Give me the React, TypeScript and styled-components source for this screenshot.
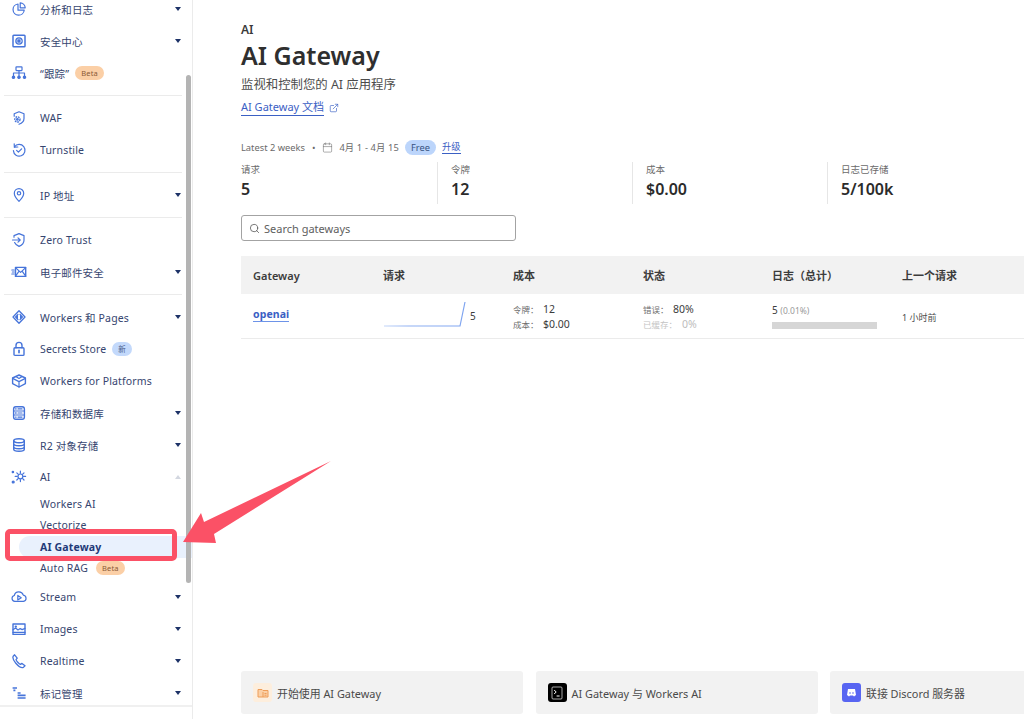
import React from "react";
import styled, { createGlobalStyle } from "styled-components";
import { Calendar, Search, ExternalLink } from "lucide-react";

const Global = createGlobalStyle`
  html, body { margin: 0; padding: 0; background: #fff; }
  body { font-family: "Noto Sans", "Noto Sans CJK SC", sans-serif; color: #313131; }
  * { box-sizing: border-box; }
`;

const Page = styled.div`
  position: relative;
  display: flex;
  width: 1024px;
  height: 719px;
  overflow: hidden;
`;

const Sidebar = styled.nav`
  width: 193px;
  flex: none;
  height: 719px;
  border-right: 1px solid #ebebeb;
  padding-right: 9px;
  overflow: hidden;
`;

const NavList = styled.div`
  margin-top: -7px;
  display: flex;
  flex-direction: column;
`;

const Row = styled.div`
  display: flex;
  align-items: center;
  height: 32px;
  padding-left: 11px;
  font-size: 10.5px;
  letter-spacing: 0.15px;
  color: #36456f;
`;

const IconSlot = styled.span`
  width: 16px;
  height: 16px;
  margin-right: 13px;
  flex: none;
  color: #4674da;
  display: flex;
  align-items: center;
  justify-content: center;
`;

const Label = styled.span`
  flex: 1;
  display: flex;
  align-items: center;
  white-space: nowrap;
`;

const Caret = styled.span<{ $up?: boolean }>`
  width: 0;
  height: 0;
  margin-right: 2px;
  border-left: 3.5px solid transparent;
  border-right: 3.5px solid transparent;
  ${(p) =>
    p.$up
      ? "border-bottom: 4px solid #d3d7e0;"
      : "border-top: 4px solid #1d3267;"}
`;

const Pill = styled.span<{ $kind: "beta" | "new"; $gap?: number }>`
  margin-left: ${(p) => p.$gap ?? 6}px;
  height: 14px;
  padding: 0 6px;
  border-radius: 7px;
  font-size: 7.5px;
  line-height: 14px;
  letter-spacing: 0.2px;
  background: ${(p) => (p.$kind === "beta" ? "#fbcfa6" : "#c3d9fb")};
  color: ${(p) => (p.$kind === "beta" ? "#8a5a36" : "#4a5f8c")};
`;

const Divider = styled.div`
  height: 1px;
  margin: 6px 1px 6px 4px;
  background: #ebebeb;
`;

const SubList = styled.div`
  display: flex;
  flex-direction: column;
  margin-bottom: 2px;
`;

const SubRow = styled.div<{ $active?: boolean }>`
  display: flex;
  align-items: center;
  height: 21.5px;
  font-size: 10.5px;
  letter-spacing: 0.15px;
  color: #36456f;
  ${(p) =>
    p.$active
      ? `
    margin-left: 19px;
    margin-right: -9px;
    padding-left: 21px;
    font-weight: 700;
    color: #1f3a78;
    background: #e9f1fd;
    border-radius: 11px 0 0 11px;
  `
      : "padding-left: 40px;"}
`;

const SidebarFooter = styled.div`
  position: absolute;
  left: 0;
  bottom: 0;
  width: 192px;
  height: 14px;
  background: #fff;
  border-top: 2px solid #f0f0f0;
`;

const Main = styled.main`
  flex: 1;
  min-width: 0;
  height: 719px;
  padding: 22px 0 5px 48px;
  display: flex;
  flex-direction: column;
`;

const Eyebrow = styled.div`
  font-size: 12px;
  line-height: 16px;
  font-weight: 600;
  color: #3a3a3a;
`;

const Title = styled.h1`
  margin: 0;
  font-size: 25px;
  line-height: 35px;
  font-weight: 600;
  color: #2f2f2f;
`;

const Subtitle = styled.div`
  margin-top: 2px;
  font-size: 12.4px;
  line-height: 20px;
  color: #4c4c4c;
`;

const DocLine = styled.div`
  margin-top: 4px;
  display: flex;
  align-items: center;
  gap: 5px;
  font-size: 11px;
  line-height: 16px;
  color: #3b60c4;
`;

const DocLink = styled.a`
  border-bottom: 1px solid #3b60c4;
`;

const RangeLine = styled.div`
  margin-top: 23px;
  display: flex;
  align-items: center;
  height: 16px;
  font-size: 9.3px;
  color: #6a6a6a;
`;

const Dot = styled.span`
  margin: 0 7px;
`;

const DateText = styled.span`
  margin: 0 6px;
  letter-spacing: 0.15px;
`;

const FreeBadge = styled.span`
  height: 15px;
  padding: 0 6px;
  border-radius: 8px;
  background: #bcd5fb;
  color: #36517f;
  font-size: 9.3px;
  line-height: 15px;
`;

const UpgradeLink = styled.a`
  margin-left: 6px;
  color: #3b60c4;
  border-bottom: 1px solid #3b60c4;
  line-height: 12px;
`;

const Stats = styled.div`
  margin-top: 7px;
  display: grid;
  grid-template-columns: repeat(4, 195px);
  height: 42px;
`;

const Stat = styled.div<{ $first?: boolean }>`
  padding-top: 1px;
  padding-left: ${(p) => (p.$first ? 0 : "13px")};
  border-left: ${(p) => (p.$first ? "none" : "1px solid #e6e6e6")};
  margin-left: ${(p) => (p.$first ? 0 : "1px")};
`;

const StatLabel = styled.div`
  font-size: 9.5px;
  line-height: 14px;
  color: #6a6a6a;
`;

const StatValue = styled.div`
  font-size: 16px;
  line-height: 24px;
  font-weight: 600;
  color: #2b2b2b;
`;

const SearchBox = styled.div`
  margin-top: 11px;
  width: 275px;
  height: 26px;
  flex: none;
  border: 1px solid #a3a3a3;
  border-radius: 3px;
  display: flex;
  align-items: center;
  gap: 4px;
  padding-left: 7px;
  font-size: 11px;
  color: #5e5e5e;
`;

const Table = styled.div`
  margin-top: 15px;
  width: 800px;
`;

const TableGrid = styled.div`
  display: grid;
  grid-template-columns: 130px 130px 130px 129px 130px 151px;
`;

const HeadRow = styled(TableGrid)`
  height: 38px;
  background: #f2f2f2;
  align-items: center;
  font-size: 11px;
  font-weight: 600;
  color: #3c3c3c;
`;

const BodyRow = styled(TableGrid)`
  height: 45px;
  align-items: center;
  border-bottom: 1px solid #ebebeb;
  font-size: 10px;
  line-height: 14px;
`;

const Cell = styled.div`
  padding-left: 12px;
  min-width: 0;
`;

const GatewayCell = styled(Cell)`
  margin-top: -4px;
`;

const GatewayLink = styled.a`
  font-size: 10.5px;
  font-weight: 700;
  color: #3b60c4;
  border-bottom: 1px solid #6d93e8;
  letter-spacing: 0.1px;
`;

const SparkCell = styled(Cell)`
  display: flex;
  align-items: center;
  gap: 4px;
  padding-left: 13px;
  color: #3c3c3c;
`;

const SparkSvg = styled.svg`
  margin-top: -4px;
`;

const MetricCell = styled(Cell)`
  padding-top: 2px;
`;

const MetricLine = styled.div<{ $muted?: boolean }>`
  display: flex;
  align-items: baseline;
  height: 15.5px;
  font-size: 10.5px;
  color: ${(p) => (p.$muted ? "#bdbdbd" : "#3c3c3c")};
`;

const MetricKey = styled.span<{ $muted?: boolean }>`
  font-size: 8.5px;
  width: ${(p) => (p.$muted ? "39px" : "30px")};
  color: ${(p) => (p.$muted ? "#c4c4c4" : "#6e6e6e")};
`;

const LogCount = styled.div`
  font-size: 10px;
  line-height: 14px;
  color: #3c3c3c;
`;

const LogPct = styled.span`
  font-size: 8.5px;
  color: #9a9a9a;
`;

const Bar = styled.div`
  margin-top: 4px;
  width: 105px;
  height: 7px;
  background: #d6d6d6;
`;

const TimeCell = styled(Cell)`
  padding-top: 3px;
  font-size: 9px;
  color: #4c4c4c;
`;

const Cards = styled.div`
  margin-top: auto;
  display: grid;
  grid-template-columns: 282px 282px 282px;
  column-gap: 12.5px;
`;

const Card = styled.div`
  height: 43px;
  background: #f2f2f2;
  border-radius: 3px;
  display: flex;
  align-items: center;
  gap: 5px;
  padding-left: 12px;
  font-size: 10.9px;
  color: #4a4a4a;
`;

const CardIcon = styled.span<{ $bg: string; $fg: string }>`
  width: 19px;
  height: 19px;
  border-radius: 3px;
  background: ${(p) => p.$bg};
  color: ${(p) => p.$fg};
  display: flex;
  align-items: center;
  justify-content: center;
`;

const Scrollbar = styled.div`
  position: absolute;
  left: 186px;
  top: 75px;
  width: 5px;
  height: 508px;
  border-radius: 3px;
  background: #b4b4b4;
`;

const Highlight = styled.div`
  position: absolute;
  left: 5px;
  top: 529px;
  width: 172px;
  height: 32px;
  border: 5px solid #fb5166;
  border-radius: 5px;
`;

const Arrow = styled.svg`
  position: absolute;
  left: 0;
  top: 0;
  width: 1024px;
  height: 719px;
  pointer-events: none;
`;

const Svg = ({ children }: { children: React.ReactNode }) => (
  <svg width="16" height="16" viewBox="0 0 16 16" fill="none" stroke="currentColor" strokeWidth="1.2" strokeLinecap="round" strokeLinejoin="round">
    {children}
  </svg>
);

const icons: Record<string, React.ReactNode> = {
  analytics: <Svg><path d="M7 3a5.6 5.6 0 1 0 6.2 6.2H7Z" /><path d="M9.2 1.8a5.2 5.2 0 0 1 5 5H9.2Z" /></Svg>,
  security: <Svg><rect x="2" y="2.2" width="12" height="11.6" rx=".8" strokeWidth="1.5" /><circle cx="8" cy="8" r="3.8" fill="currentColor" stroke="none" /><circle cx="8" cy="8" r="2.2" stroke="#fff" strokeWidth=".6" /></Svg>,
  trace: <Svg><rect x="5" y="1.8" width="6" height="3.8" rx=".5" /><path d="M8 5.6V8M2.5 10.8V8h11v2.8M8 8v2.8" /><circle cx="2.5" cy="12.3" r="1.2" fill="currentColor" /><circle cx="8" cy="12.3" r="1.2" fill="currentColor" /><circle cx="13.5" cy="12.3" r="1.2" fill="currentColor" /></Svg>,
  waf: <Svg><path d="M3.2 6.2V3.8L8 1.8l5 2v4.6c0 2.8-2.2 4.8-5 5.8" /><circle cx="6.4" cy="9.4" r="2.6" strokeDasharray="1.7 .8" strokeLinecap="butt" strokeWidth="1.4" /><circle cx="6.4" cy="9.4" r=".8" /></Svg>,
  turnstile: <Svg><path d="M3.2 1.8l.2 3.4 3.4-.2" /><path d="M3.4 5A5.8 5.8 0 1 1 2.4 8.6" /><path d="M5.6 8.4l1.8 1.8 3.2-3.4" /></Svg>,
  ip: <Svg><path d="M8 14.4S3.3 9.8 3.3 6.3a4.7 4.7 0 0 1 9.4 0C12.7 9.8 8 14.4 8 14.4Z" /><circle cx="8" cy="6.3" r="1.7" /></Svg>,
  zero: <Svg><path d="M3 5.2V3.6L8 1.6l5 2v4.6c0 3-2.2 5-5 6.2-2-.8-3.6-2-4.4-3.8" /><path d="M1.5 8h7.5M7 5.8L9.2 8 7 10.2" /></Svg>,
  mail: <Svg><rect x="4.5" y="3.4" width="10.2" height="9" strokeWidth="1.4" /><path d="M4.5 3.6l5.1 4.8 5.1-4.8M4.5 12.2l3.6-5M14.7 12.2l-3.6-5M.8 6h2.4M1.4 8h1.8M.8 10h2.4" /></Svg>,
  workers: <Svg><path d="M8 1.8L2 8l6 6.2L14 8Z" strokeWidth="1.3" /><path d="M7 5.4L4.6 8 7 10.6M9 5.4L11.4 8 9 10.6" fill="currentColor" /></Svg>,
  secrets: <Svg><rect x="3" y="6.8" width="10" height="7.6" rx="1" strokeWidth="1.4" /><path d="M5 6.8V4.4a3 3 0 0 1 6 0v2.4" strokeWidth="1.4" /><path d="M8 9.4v2.2" strokeWidth="1.7" /></Svg>,
  platforms: <Svg><path d="M8 2l6.4 3v5.6L8 14 1.6 10.6V5Z" strokeWidth="1.4" /><path d="M1.6 5.4L8 8.6l6.4-3.2M8 8.6V14" /><path d="M4.8 3.6L8 5.4l3.2-1.8" /></Svg>,
  storage: <Svg><rect x="2.6" y="1.8" width="10.8" height="12.4" rx="2.2" strokeWidth="1.4" /><path d="M2.6 6h10.8M2.6 10h10.8M7 3.9h4M7 8h4M7 12.1h4" /><path d="M4.6 3.9h.5M4.6 8h.5M4.6 12.1h.5" strokeWidth="1.4" /></Svg>,
  r2: <Svg><ellipse cx="8" cy="3.8" rx="5.3" ry="2" strokeWidth="1.4" /><path d="M2.7 3.8v8.4c0 1.1 2.4 2 5.3 2s5.3-.9 5.3-2V3.8M2.7 6.8c0 1.1 2.4 2 5.3 2s5.3-.9 5.3-2M2.7 9.8c0 1.1 2.4 2 5.3 2s5.3-.9 5.3-2" strokeWidth="1.4" /></Svg>,
  ai: <Svg><circle cx="9.4" cy="7.4" r="2.4" /><path d="M9.4 2.2v2M9.4 10.6v2M4.2 7.4h2M12.6 7.4h2M5.8 3.8l1.3 1.3M11.7 9.7l1.3 1.3M13 3.8l-1.3 1.3M7.1 9.7L5.8 11" /><circle cx="1.9" cy="3" r=".7" fill="currentColor" /><circle cx="2.2" cy="13" r="1" fill="currentColor" /></Svg>,
  stream: <Svg><path d="M3.8 12.4a3 3 0 0 1-.5-5.9 4.7 4.7 0 0 1 9-.4 3.2 3.2 0 0 1 .2 6.3Z" /><path d="M6.8 6.4l3.4 2.4-3.4 2.2Z" /></Svg>,
  images: <Svg><rect x="2" y="3" width="12" height="10.4" strokeWidth="1.4" /><path d="M2 8.8l2.6-1.8 2.4 2 2.2-1.4 2 1 2.8-1.2" /><circle cx="4.8" cy="5.6" r=".6" /><path d="M2 11.4h12" /></Svg>,
  realtime: <Svg><path d="M3.6 1.8L2.2 3.2c-.7 1.4 0 4 2.6 7s6 4.8 7.6 4.2l1.6-1.6-3-2.4-1.6 1c-1.2-.4-3.8-3-4.4-4.8l1.2-1.4Z" strokeWidth="1.3" /></Svg>,
  tags: <Svg><path d="M1.6 3h4.4M2.4 5.4h2M6.6 8h3M6.6 10.4h8M6.6 13h8" strokeWidth="1.7" strokeLinecap="butt" /></Svg>,
};

type Item = { icon: string; label: string; caret?: boolean; pill?: ["beta" | "new", string] };

const NavRow = ({ icon, label, caret, pill }: Item) => (
  <Row>
    <IconSlot>{icons[icon]}</IconSlot>
    <Label>
      {label}
      {pill && <Pill $kind={pill[0]}>{pill[1]}</Pill>}
    </Label>
    {caret && <Caret />}
  </Row>
);

const Spark = () => (
  <SparkSvg width="82" height="26" viewBox="0 0 82 26" fill="none">
    <defs>
      <linearGradient id="sparkFade" x1="0" x2="1" y1="0" y2="0">
        <stop offset="0" stopColor="#c4d6f8" />
        <stop offset="0.3" stopColor="#8fb0f2" />
        <stop offset="1" stopColor="#7ea4f0" />
      </linearGradient>
    </defs>
    <path d="M0 25H76L81 1" stroke="url(#sparkFade)" strokeWidth="1.2" />
  </SparkSvg>
);

const DiscordMark = () => (
  <svg width="11" height="11" viewBox="0 0 11 11">
    <path d="M2 2h7l1 6-2 1.5-1-1H4l-1 1L1 8Z" fill="#fff" />
    <circle cx="4" cy="6" r=".8" fill="#5865f2" />
    <circle cx="7" cy="6" r=".8" fill="#5865f2" />
  </svg>
);

const FolderMark = () => (
  <svg width="12" height="12" viewBox="0 0 12 12" fill="#fbd0a6" stroke="#ee9d58" strokeWidth="1">
    <path d="M1 2.5h4l1 1h5v6.5H1Z" />
    <path d="M6 5v5M7.5 6.5h2M7.5 8.2h2" fill="none" />
  </svg>
);

const TerminalMark = () => (
  <svg width="12" height="14" viewBox="0 0 12 14" fill="none" stroke="#fff" strokeWidth="1">
    <rect x="1" y="1" width="10" height="12" rx="1" strokeOpacity=".65" />
    <path d="M3.2 4l2 2-2 2M5.6 10h3" />
  </svg>
);

export default function App() {
  return (
    <Page>
      <Global />
      <Sidebar>
        <NavList>
          <NavRow icon="analytics" label="分析和日志" caret />
          <NavRow icon="security" label="安全中心" caret />
          <NavRow icon="trace" label="“跟踪”" pill={["beta", "Beta"]} />
          <Divider />
          <NavRow icon="waf" label="WAF" />
          <NavRow icon="turnstile" label="Turnstile" />
          <Divider />
          <NavRow icon="ip" label="IP 地址" caret />
          <Divider />
          <NavRow icon="zero" label="Zero Trust" />
          <NavRow icon="mail" label="电子邮件安全" caret />
          <Divider />
          <NavRow icon="workers" label="Workers 和 Pages" caret />
          <NavRow icon="secrets" label="Secrets Store" pill={["new", "新"]} />
          <NavRow icon="platforms" label="Workers for Platforms" />
          <NavRow icon="storage" label="存储和数据库" caret />
          <NavRow icon="r2" label="R2 对象存储" caret />
          <Row>
            <IconSlot>{icons.ai}</IconSlot>
            <Label>AI</Label>
            <Caret $up />
          </Row>
          <SubList>
            <SubRow>Workers AI</SubRow>
            <SubRow>Vectorize</SubRow>
            <SubRow $active>AI Gateway</SubRow>
            <SubRow>
              Auto RAG<Pill $kind="beta" $gap={8}>Beta</Pill>
            </SubRow>
          </SubList>
          <NavRow icon="stream" label="Stream" caret />
          <NavRow icon="images" label="Images" caret />
          <NavRow icon="realtime" label="Realtime" caret />
          <NavRow icon="tags" label="标记管理" caret />
        </NavList>
      </Sidebar>

      <Main>
        <Eyebrow>AI</Eyebrow>
        <Title>AI Gateway</Title>
        <Subtitle>监视和控制您的 AI 应用程序</Subtitle>
        <DocLine>
          <DocLink>AI Gateway 文档</DocLink>
          <ExternalLink size={10} strokeWidth={1.6} />
        </DocLine>
        <RangeLine>
          Latest 2 weeks
          <Dot>•</Dot>
          <Calendar size={11} strokeWidth={1.2} />
          <DateText>4月 1 - 4月 15</DateText>
          <FreeBadge>Free</FreeBadge>
          <UpgradeLink>升级</UpgradeLink>
        </RangeLine>
        <Stats>
          <Stat $first>
            <StatLabel>请求</StatLabel>
            <StatValue>5</StatValue>
          </Stat>
          <Stat>
            <StatLabel>令牌</StatLabel>
            <StatValue>12</StatValue>
          </Stat>
          <Stat>
            <StatLabel>成本</StatLabel>
            <StatValue>$0.00</StatValue>
          </Stat>
          <Stat>
            <StatLabel>日志已存储</StatLabel>
            <StatValue>5/100k</StatValue>
          </Stat>
        </Stats>
        <SearchBox>
          <Search size={11} strokeWidth={1.6} color="#4a4a4a" />
          Search gateways
        </SearchBox>
        <Table>
          <HeadRow>
            <Cell>Gateway</Cell>
            <Cell>请求</Cell>
            <Cell>成本</Cell>
            <Cell>状态</Cell>
            <Cell>日志（总计）</Cell>
            <Cell>上一个请求</Cell>
          </HeadRow>
          <BodyRow>
            <GatewayCell>
              <GatewayLink>openai</GatewayLink>
            </GatewayCell>
            <SparkCell>
              <Spark />5
            </SparkCell>
            <MetricCell>
              <MetricLine>
                <MetricKey>令牌：</MetricKey>12
              </MetricLine>
              <MetricLine>
                <MetricKey>成本：</MetricKey>$0.00
              </MetricLine>
            </MetricCell>
            <MetricCell>
              <MetricLine>
                <MetricKey>错误：</MetricKey>80%
              </MetricLine>
              <MetricLine $muted>
                <MetricKey $muted>已缓存：</MetricKey>0%
              </MetricLine>
            </MetricCell>
            <Cell>
              <LogCount>
                5 <LogPct>(0.01%)</LogPct>
              </LogCount>
              <Bar />
            </Cell>
            <TimeCell>1 小时前</TimeCell>
          </BodyRow>
        </Table>
        <Cards>
          <Card>
            <CardIcon $bg="#fdeedd" $fg="#f0a05c">
              <FolderMark />
            </CardIcon>
            开始使用 AI Gateway
          </Card>
          <Card>
            <CardIcon $bg="#000" $fg="#fff">
              <TerminalMark />
            </CardIcon>
            AI Gateway 与 Workers AI
          </Card>
          <Card>
            <CardIcon $bg="#5865f2" $fg="#fff">
              <DiscordMark />
            </CardIcon>
            联接 Discord 服务器
          </Card>
        </Cards>
      </Main>

      <SidebarFooter />
      <Scrollbar />
      <Highlight />
      <Arrow viewBox="0 0 1024 719">
        <path d="M183 542L201 513L204 522L331 461L214 534L216 543Z" fill="#fb5166" />
      </Arrow>
    </Page>
  );
}
